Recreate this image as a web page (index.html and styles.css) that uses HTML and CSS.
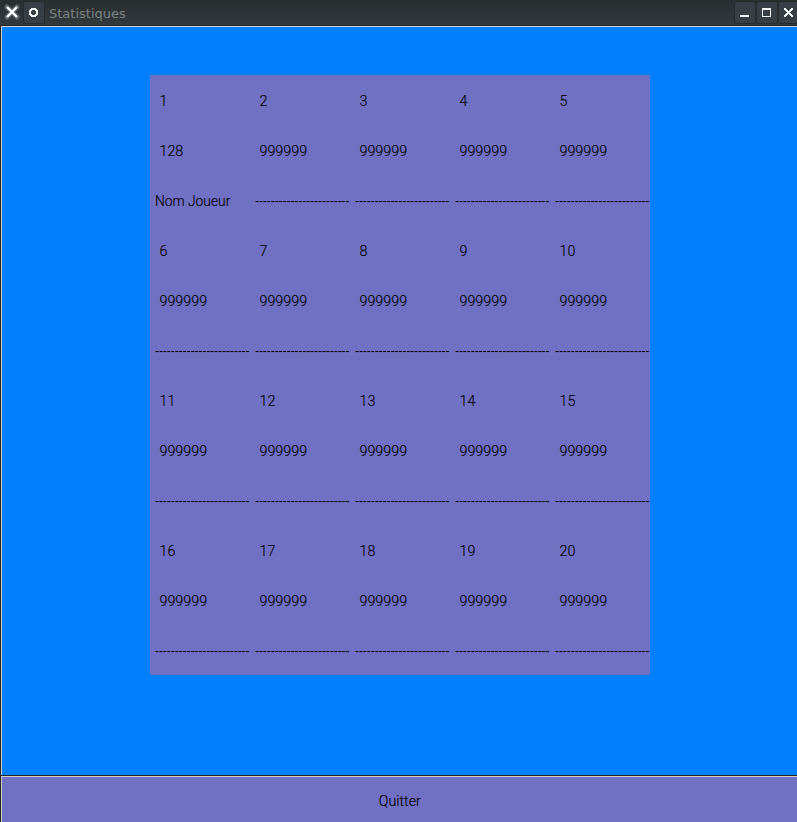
FILE: index.html
```html
<!DOCTYPE html>
<html lang="fr">
<head>
<meta charset="utf-8">
<title>Statistiques</title>
<link rel="stylesheet" href="styles.css">
</head>
<body>
<div class="window">
  <header class="titlebar">
    <svg class="app" width="18" height="20" viewBox="0 0 18 20"><path class="halo" d="M4 5l10 10M14 5L4 15"/><path class="cross" d="M4 5l10 10M14 5L4 15"/></svg>
    <span class="btn menu"><svg width="20" height="20" viewBox="0 0 20 20"><path d="M7 6h5v1h1v1h1v5h-1v1h-1v1H7v-1H6v-1H5V8h1V7h1zM8 8v1H7v3h1v1h3v-1h1V9h-1V8z" fill-rule="evenodd"/></svg></span>
    <h1>Statistiques</h1>
    <span class="btn"><svg width="20" height="20" viewBox="0 0 20 20"><path d="M5 13h9v2H5z"/></svg></span>
    <span class="btn"><svg width="20" height="20" viewBox="0 0 20 20"><path d="M5 6h9v9H5zM6 8v6h7V8z" fill-rule="evenodd"/></svg></span>
    <span class="btn last"><svg width="20" height="20" viewBox="0 0 20 20"><path transform="translate(0 1)" d="M5 5h2v1h1v1h1v1h1V7h1V6h1V5h2v2h-1v1h-1v1h-1v1h1v1h1v1h1v2h-2v-1h-1v-1h-1v-1H9v1H8v1H7v1H5v-2h1v-1h1v-1h1V9H7V8H6V7H5z"/></svg></span>
  </header>
  <main class="stage"><div class="scores" id="scores"></div></main>
  <button class="quit"><span>Quitter</span></button>
</div>
<script src="scores.js"></script>
</body>
</html>
```

FILE: styles.css
```css
* { box-sizing: border-box; }
body { margin: 0; width: 797px; height: 822px; overflow: hidden; font: 300 15.5px Roboto, "Liberation Sans", sans-serif; color: #000; }
.window { height: 822px; display: flex; flex-direction: column; background: #1f2324; }
.titlebar { height: 26px; flex: none; display: flex; align-items: flex-start; gap: 2px; padding: 2px 0 0 3px; background: linear-gradient(#292e31, #33393c); border-bottom: 1px solid #202425; overflow: hidden; }
.titlebar svg { display: block; flex: none; }
.app { fill: none; }
.halo { stroke: #626769; stroke-width: 5; stroke-linecap: round; }
.cross { stroke: #fff; stroke-width: 2.2; }
.btn { width: 20px; height: 21px; flex: none; background: #383e45; border-radius: 2px; box-shadow: 0 0 0 1px #282c2f; fill: #f2f3f3; }
.menu { margin-left: 1px; }
h1 { flex: 1; margin: 0 0 0 3px; font: 13px/23px "DejaVu Sans", sans-serif; color: #7b8485; }
.last { margin-right: -2px; }
.stage { flex: none; height: 749px; margin-left: 1px; border: solid #d5d1c8; border-width: 1px 0 0 1px; background: #0080ff; padding: 48px 0 0 148px; }
.scores { width: 500px; height: 600px; background: #7171c4; display: grid; grid-template-columns: repeat(5, 100px); grid-auto-rows: 50px; line-height: 52px; white-space: nowrap; }
.num, .name, .quit { -webkit-text-stroke: .15px #000; }
.num { padding-left: 10.2px; transform: scaleX(.925); transform-origin: left; }
.name { padding-left: 5.5px; transform: scaleX(.89); transform-origin: left; }
.dashes { padding-left: 5px; font: 12px/53px "Liberation Sans", sans-serif; letter-spacing: -.06px; }
.quit { flex: 1; margin: 1px 0 0 1px; padding: 3px 0 0 1px; border: solid #d5d1c8; border-width: 1px 0 0 1px; background: #7171c4; color: #000; font: inherit; }
.quit span { display: inline-block; transform: scaleX(.92); }
```

FILE: scores.js
```js
const grid = document.getElementById("scores");
function cell(text, kind) {
  const el = document.createElement("div");
  el.className = kind;
  el.textContent = text;
  grid.appendChild(el);
}
for (let row = 0; row < 4; row++) {
  for (let i = 1; i <= 5; i++) cell(row * 5 + i, "num");
  for (let i = 1; i <= 5; i++) cell(row === 0 && i === 1 ? "128" : "999999", "num");
  for (let i = 1; i <= 5; i++) {
    if (row === 0 && i === 1) cell("Nom Joueur", "name");
    else cell("-".repeat(24), "dashes");
  }
}
```
